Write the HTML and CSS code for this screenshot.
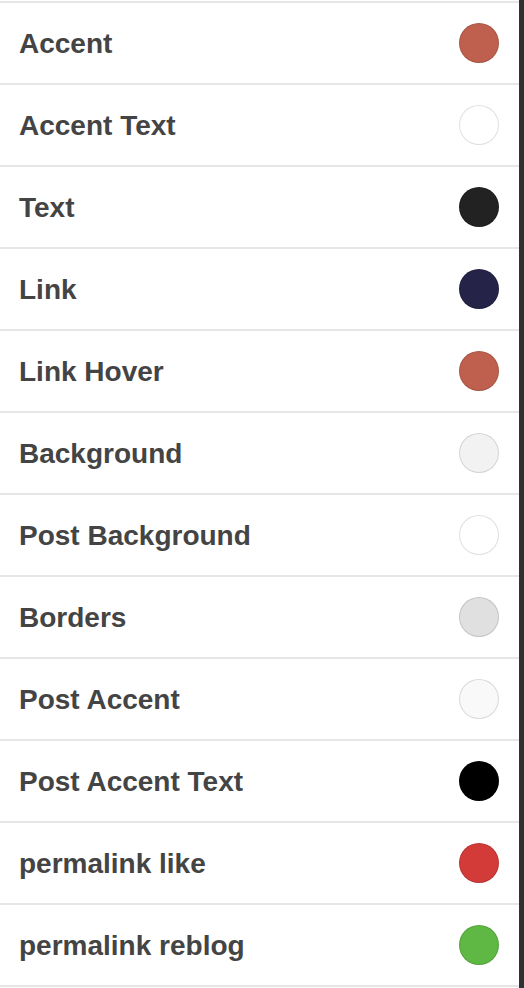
FILE: index.html
```html
<!DOCTYPE html>
<html lang="en">
<head>
    <meta charset="UTF-8">
    <meta name="viewport" content="width=device-width, initial-scale=1.0">
    <title>Theme colors</title>
    <link rel="stylesheet" href="styles.css">
</head>
<body>
    <div class="page">
        <ul class="colors">
            <li><span>Accent</span><i class="swatch" style="background:#bf604e"></i></li>
            <li><span>Accent Text</span><i class="swatch" style="background:#ffffff"></i></li>
            <li><span>Text</span><i class="swatch" style="background:#222222"></i></li>
            <li><span>Link</span><i class="swatch" style="background:#252347"></i></li>
            <li><span>Link Hover</span><i class="swatch" style="background:#bf604e"></i></li>
            <li><span>Background</span><i class="swatch" style="background:#f2f2f2"></i></li>
            <li><span>Post Background</span><i class="swatch" style="background:#ffffff"></i></li>
            <li><span>Borders</span><i class="swatch" style="background:#e0e0e0"></i></li>
            <li><span>Post Accent</span><i class="swatch" style="background:#f9f9f9"></i></li>
            <li><span>Post Accent Text</span><i class="swatch" style="background:#000000"></i></li>
            <li><span>permalink like</span><i class="swatch" style="background:#d23b38"></i></li>
            <li><span>permalink reblog</span><i class="swatch" style="background:#5fb843"></i></li>
        </ul>
        <div class="scrollbar"></div>
    </div>
</body>
</html>
```

FILE: styles.css
```css
body {
    margin: 0;
    padding: 0;
    background-color: #fff;
    font-family: "Liberation Sans", Arial, sans-serif;
}
.page {
    display: flex;
    min-height: 988px;
}
.colors {
    flex: 1;
    list-style-type: none;
    margin: 1px 0 0 0;
    padding: 0;
    border-top: 2px solid #e6e6e6;
}
.colors li {
    display: flex;
    align-items: center;
    justify-content: space-between;
    height: 80px;
    padding: 0 20px 0 19px;
    border-bottom: 2px solid #e6e6e6;
}
.colors li span {
    padding-top: 2px;
    font-size: 28px;
    font-weight: bold;
    color: #444;
}
.swatch {
    display: block;
    width: 38px;
    height: 38px;
    border-radius: 50%;
    border: 1px solid rgba(0, 0, 0, 0.12);
}
.scrollbar {
    width: 5px;
    background-color: #2f3134;
}
```
